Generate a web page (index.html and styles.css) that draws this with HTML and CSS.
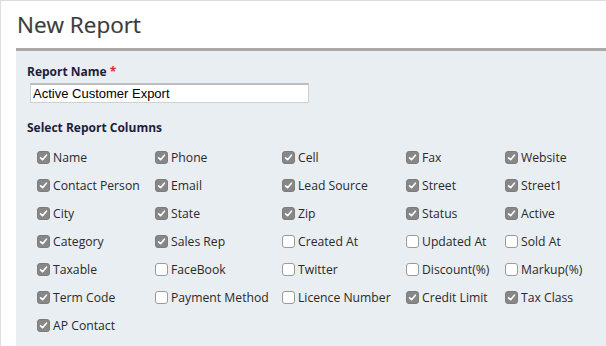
FILE: index.html
```html
<!DOCTYPE html>
<html>

<head>
    <meta charset="utf-8" />
    <title>New Report</title>
    <link rel="stylesheet" href="styles.css">
</head>

<body>
    <h1 class="page-title">New Report</h1>

    <div class="panel">
        <label class="field-label" for="reportName">Report Name <span class="required">*</span></label>
        <input class="text-input" id="reportName" value="Active Customer Export">

        <div class="section-label">Select Report Columns</div>

        <div class="columns" id="columns"></div>
    </div>

    <script>
        columns_list = [
            ["Name", 1], ["Phone", 1], ["Cell", 1], ["Fax", 1], ["Website", 1],
            ["Contact Person", 1], ["Email", 1], ["Lead Source", 1], ["Street", 1], ["Street1", 1],
            ["City", 1], ["State", 1], ["Zip", 1], ["Status", 1], ["Active", 1],
            ["Category", 1], ["Sales Rep", 1], ["Created At", 0], ["Updated At", 0], ["Sold At", 0],
            ["Taxable", 1], ["FaceBook", 0], ["Twitter", 0], ["Discount(%)", 0], ["Markup(%)", 0],
            ["Term Code", 1], ["Payment Method", 0], ["Licence Number", 0], ["Credit Limit", 1], ["Tax Class", 1],
            ["AP Contact", 1]
        ];

        check_svg = '<svg width="9" height="9" viewBox="0 0 9 9"><path d="M1.6 4.8 L3.6 6.7 L7.4 2.2" fill="none" stroke="#fff" stroke-width="1.6" stroke-linecap="round" stroke-linejoin="round"/></svg>';

        html = "";
        for (i = 0; i < columns_list.length; i++) {
            if (columns_list[i][1] == 1) {
                box = '<span class="box checked">' + check_svg + '</span>';
            } else {
                box = '<span class="box"></span>';
            }
            html += '<label class="column-item">' + box + '<span class="column-name">' + columns_list[i][0] + '</span></label>';
        }
        document.getElementById("columns").innerHTML = html;
    </script>
</body>

</html>
```

FILE: styles.css
```css
html,
body {
    height: 100%;
}

body {
    margin: 0;
    box-sizing: border-box;
    background-color: white;
    border-top: 1px solid #dcdcdc;
    border-left: 1px solid #dcdcdc;
    overflow: hidden;
    display: flex;
    flex-direction: column;
}

.page-title {
    margin: 0;
    padding-left: 16px;
    height: 47px;
    line-height: 47px;
    font-family: 'Open Sans', sans-serif;
    font-weight: normal;
    font-size: 22.5px;
    color: #3a3a3a;
    -webkit-text-stroke: 0.2px #3a3a3a;
}

.panel {
    flex: 1;
    margin-left: 15px;
    border-top: 3px solid #a9a9a9;
    background-color: #e9eef2;
    padding: 12px 0 0 11px;
}

.field-label,
.section-label {
    display: block;
    font-family: 'Open Sans', sans-serif;
    font-weight: bold;
    font-size: 12px;
    line-height: 17px;
    color: #1e1e3c;
}

.required {
    color: #e0262b;
}

.text-input {
    display: block;
    box-sizing: border-box;
    margin: 3px 0 0 3px;
    width: 279px;
    height: 20px;
    padding: 0 2px;
    border: 1px solid #cfcfcf;
    border-top: 2px solid #bdbdbd;
    font-family: 'Liberation Sans', Arial, sans-serif;
    font-size: 13px;
    color: black;
    background-color: white;
    outline: none;
}

.section-label {
    margin-top: 16px;
}

.columns {
    display: grid;
    grid-template-columns: 118px 127px 124px 99px auto;
    grid-auto-rows: 28px;
    margin-left: 10px;
    margin-top: 7px;
}

.column-item {
    display: flex;
    align-items: center;
    gap: 3px;
    font-family: 'Open Sans', sans-serif;
    font-size: 12.2px;
    color: #2a2a2a;
    white-space: nowrap;
}

.box {
    display: flex;
    align-items: center;
    justify-content: center;
    box-sizing: border-box;
    width: 13px;
    height: 13px;
    border-radius: 3px;
    border: 1px solid #9a9a9a;
    background-color: white;
}

.box.checked {
    background-color: #878787;
    border-color: #7c7c7c;
}
```
